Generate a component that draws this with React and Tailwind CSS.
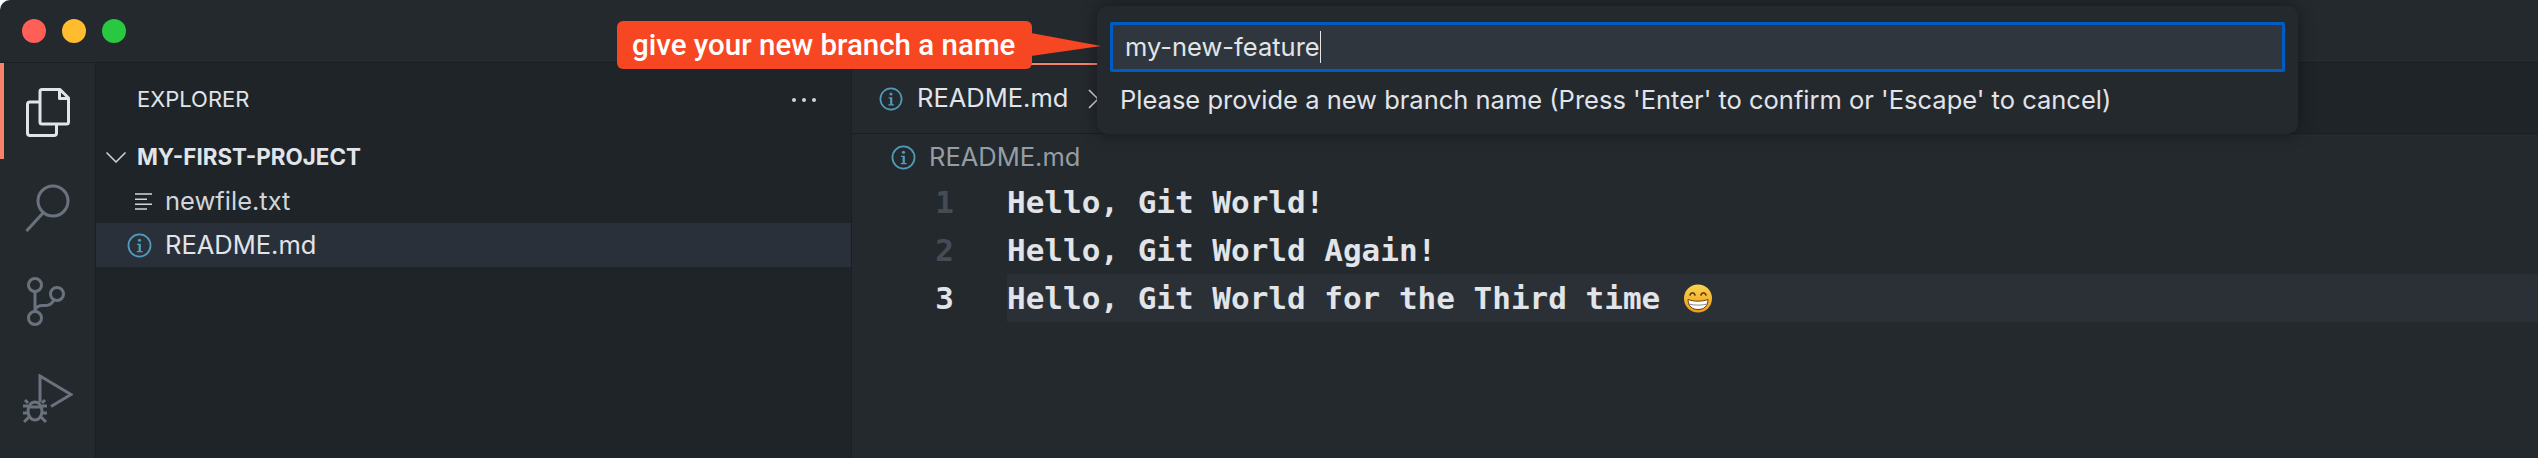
import React from 'react';

const ui = "font-['Inter','Noto_Sans',sans-serif]";

const InfoIcon = ({ className }) => (
  <svg viewBox="0 0 24 24" className={className} fill="none">
    <circle cx="12" cy="12" r="10.6" stroke="#519aba" strokeWidth="1.7" />
    <circle cx="12" cy="6.9" r="1.5" fill="#519aba" />
    <path d="M9.6 10.2h3.7v7h1.7v1.3H9.4v-1.3h1.7v-5.7H9.6z" fill="#519aba" />
  </svg>
);

const TextIcon = () => (
  <svg viewBox="0 0 17 17" className="h-[17px] w-[17px] shrink-0" stroke="#d1d5da" strokeWidth="1.6">
    <path d="M0 1h17M0 6.200h12M0 11.200h17M0 16h12" />
  </svg>
);

const FilesIcon = () => (
  <svg viewBox="0 0 44 50" className="h-[50px] w-[44px]" fill="none" stroke="#e1e4e8" strokeWidth="3" strokeLinejoin="round">
    <path d="M14 14H4a2.500 2.500 0 0 0-2.500 2.500V45a2.500 2.500 0 0 0 2.500 2.500h24a2.500 2.500 0 0 0 2.500-2.500V36" />
    <path d="M14 3.500a2 2 0 0 1 2-2h18l8.500 8.500v24a2 2 0 0 1-2 2H16a2 2 0 0 1-2-2z" />
    <path d="M33.500 2v8.500h8.500" />
  </svg>
);

const SearchIcon = () => (
  <svg viewBox="0 0 46 50" className="h-[50px] w-[46px]" fill="none" stroke="#6a737d" strokeWidth="3">
    <circle cx="28" cy="17" r="15" />
    <path d="M18 29 1.500 47" />
  </svg>
);

const GitIcon = () => (
  <svg viewBox="0 0 38 50" className="h-[50px] w-[38px]" fill="none" stroke="#6a737d" strokeWidth="3">
    <circle cx="8" cy="8" r="6.500" />
    <circle cx="30" cy="17" r="6.500" />
    <circle cx="8" cy="41" r="6.500" />
    <path d="M8 14.500v20M8 33c1-3 4-4.500 8-4.500h3c4 0 6-2 8-5.500" />
  </svg>
);

const DebugIcon = () => (
  <svg viewBox="0 0 50 50" className="h-[50px] w-[50px]" fill="none" stroke="#6a737d" strokeWidth="3">
    <path d="M17 28V2l31 18.500-20 12" />
    <ellipse cx="12" cy="37" rx="7" ry="9" />
    <path d="M6 33h12M0 32h5M19 32h5M0 39h5M19 39h5M1 48l5-5M23 48l-5-5M5 29l-3-3M19 29l3-3" />
  </svg>
);

const GrinEmoji = () => (
  <svg viewBox="0 0 28 29" className="ml-[24px] h-[29px] w-[28px] shrink-0">
    <defs>
      <linearGradient id="grin" x1="0" y1="0" x2="0" y2="1">
        <stop offset="0" stopColor="#fbd54e" />
        <stop offset="1" stopColor="#ee9a16" />
      </linearGradient>
    </defs>
    <circle cx="14" cy="14.500" r="14" fill="url(#grin)" />
    <path d="M4 15.500c6 2.200 14 2.200 20 0 0 7-4.500 10-10 10s-10-3-10-10z" fill="#fff" stroke="#6b3d0c" strokeWidth="1" />
    <path d="M4.500 20c6 1.500 13 1.500 19 0" stroke="#8c8c8c" strokeWidth="1" fill="none" />
    <path d="M6 11c1-3 4-3 5 0M17 11c1-3 4-3 5 0" stroke="#5b3410" strokeWidth="1.600" fill="none" strokeLinecap="round" />
  </svg>
);

const CodeLine = ({ num, active, children }) => (
  <div className="flex h-12 items-center">
    <div className={`w-[155px] shrink-0 pr-[53px] text-right ${active ? 'text-[#e1e4e8]' : 'text-[#444d56]'}`}>{num}</div>
    <div className={`flex h-12 min-w-0 flex-1 items-center ${active ? 'bg-[#2b3036]' : ''}`}>{children}</div>
  </div>
);

export default function App() {
  return (
    <div className={`relative h-[458px] w-[2538px] overflow-hidden bg-white ${ui}`}>
      <div className="flex h-full w-full flex-col overflow-hidden rounded-tl-[10px] bg-[#24292e]">
        {/* title bar */}
        <div className="flex h-[63px] shrink-0 items-center gap-4 border-b border-[#1b1f23] pl-[22px]">
          <span className="h-6 w-6 rounded-full bg-[#ff5f57]" />
          <span className="h-6 w-6 rounded-full bg-[#febc2e]" />
          <span className="h-6 w-6 rounded-full bg-[#28c840]" />
        </div>

        <div className="flex min-h-0 flex-1">
          {/* activity bar */}
          <div className="relative flex w-[96px] shrink-0 flex-col items-center gap-[46px] border-r border-[#1b1f23] pt-[25px]">
            <div className="absolute left-0 top-0 h-[96px] w-1 bg-[#f9826c]" />
            <div className="ml-[1px]"><FilesIcon /></div>
            <div className="ml-[1px]"><SearchIcon /></div>
            <div className="ml-[-4px] mt-[-3px]"><GitIcon /></div>
            <div className="mt-[1px]"><DebugIcon /></div>
          </div>

          {/* sidebar */}
          <div className="w-[756px] shrink-0 border-r border-[#1b1f23] bg-[#1f2428] text-[#e1e4e8]">
            <div className="flex h-[72px] items-center justify-between pl-[41px] pr-[35px] pt-[1px] text-[22px] text-[#e1e4e8]">
              <span>EXPLORER</span>
              <span className="flex gap-[6px]">
                <span className="h-1 w-1 rounded-full bg-[#d1d5da]" />
                <span className="h-1 w-1 rounded-full bg-[#d1d5da]" />
                <span className="h-1 w-1 rounded-full bg-[#d1d5da]" />
              </span>
            </div>
            <div className="flex h-[44px] items-center gap-[11px] pl-[10px] text-[22.400px] font-bold">
              <svg viewBox="0 0 20 11" className="h-[11px] w-5" fill="none" stroke="#d1d5da" strokeWidth="1.500">
                <path d="M.5.5 10 10 19.500.5" />
              </svg>
              <span>MY-FIRST-PROJECT</span>
            </div>
            <div className="flex h-[44px] items-center gap-[13px] pl-[39px] text-[25.500px] text-[#d1d5da]">
              <TextIcon />
              <span>newfile.txt</span>
            </div>
            <div className="flex h-[44px] items-center gap-[13px] bg-[#2a303a] pl-[31px] text-[25.500px] text-[#e1e4e8]">
              <InfoIcon className="h-[25px] w-[25px] shrink-0" />
              <span>README.md</span>
            </div>
          </div>

          {/* editor */}
          <div className="min-w-0 flex-1">
            <div className="h-[71px] border-b border-[#1b1f23] bg-[#1f2428]">
              <div className="flex h-[70px] w-[300px] items-center gap-[14px] border-t-2 border-[#f9826c] bg-[#24292e] pb-[1px] pl-[27px] text-[25.500px] text-[#e1e4e8]">
                <InfoIcon className="h-[24px] w-[24px] shrink-0" />
                <span>README.md</span>
                <svg viewBox="0 0 20 20" className="ml-[6px] h-5 w-5 shrink-0" fill="none" stroke="#d1d5da" strokeWidth="1.600">
                  <path d="m1 1 18 18M19 1 1 19" />
                </svg>
              </div>
            </div>
            <div className="flex h-[46px] items-center gap-[13px] pl-[39px] text-[25.500px] text-[#959da5]">
              <InfoIcon className="h-[25px] w-[25px] shrink-0" />
              <span>README.md</span>
            </div>
            <div className="mt-[-2px] font-['DejaVu_Sans_Mono',monospace] text-[31px] font-bold text-[#e1e4e8]">
              <CodeLine num="1">Hello, Git World!</CodeLine>
              <CodeLine num="2">Hello, Git World Again!</CodeLine>
              <CodeLine num="3" active>
                Hello, Git World for the Third time
                <GrinEmoji />
              </CodeLine>
            </div>
          </div>
        </div>
      </div>

      {/* branch name prompt */}
      <div className="absolute left-[1097px] top-[6px] h-[128px] w-[1201px] rounded-[10px] bg-[#24292e] px-[13px] pt-[16px] shadow-[0_0_16px_rgba(0,0,0,0.4)]">
        <div className="flex h-[50px] items-center rounded-[2px] border-[3px] border-[#005cc5] bg-[#2f363d] pl-[12px] text-[25.500px] text-[#e1e4e8]">
          <span>my-new-feature</span>
          <span className="h-[32px] w-[1.500px] bg-[#e1e4e8]" />
        </div>
        <div className="pl-[10px] pt-[11px] text-[25.500px] leading-[34px] text-[#e1e4e8]">
          Please provide a new branch name (Press 'Enter' to confirm or 'Escape' to cancel)
        </div>
      </div>

      {/* annotation callout */}
      <div className="absolute left-[617px] top-[21px] flex h-[48px] w-[415px] items-center rounded-[6px] bg-[#f64722] pl-[15px] font-['Roboto',sans-serif] text-[29.500px] font-medium text-white">
        give your new branch a name
        <svg viewBox="0 0 70 23" className="absolute left-[414px] top-[12px] h-[23px] w-[70px]">
          <path d="M0 0 70 13 0 23z" fill="#f64722" />
        </svg>
      </div>
    </div>
  );
}
